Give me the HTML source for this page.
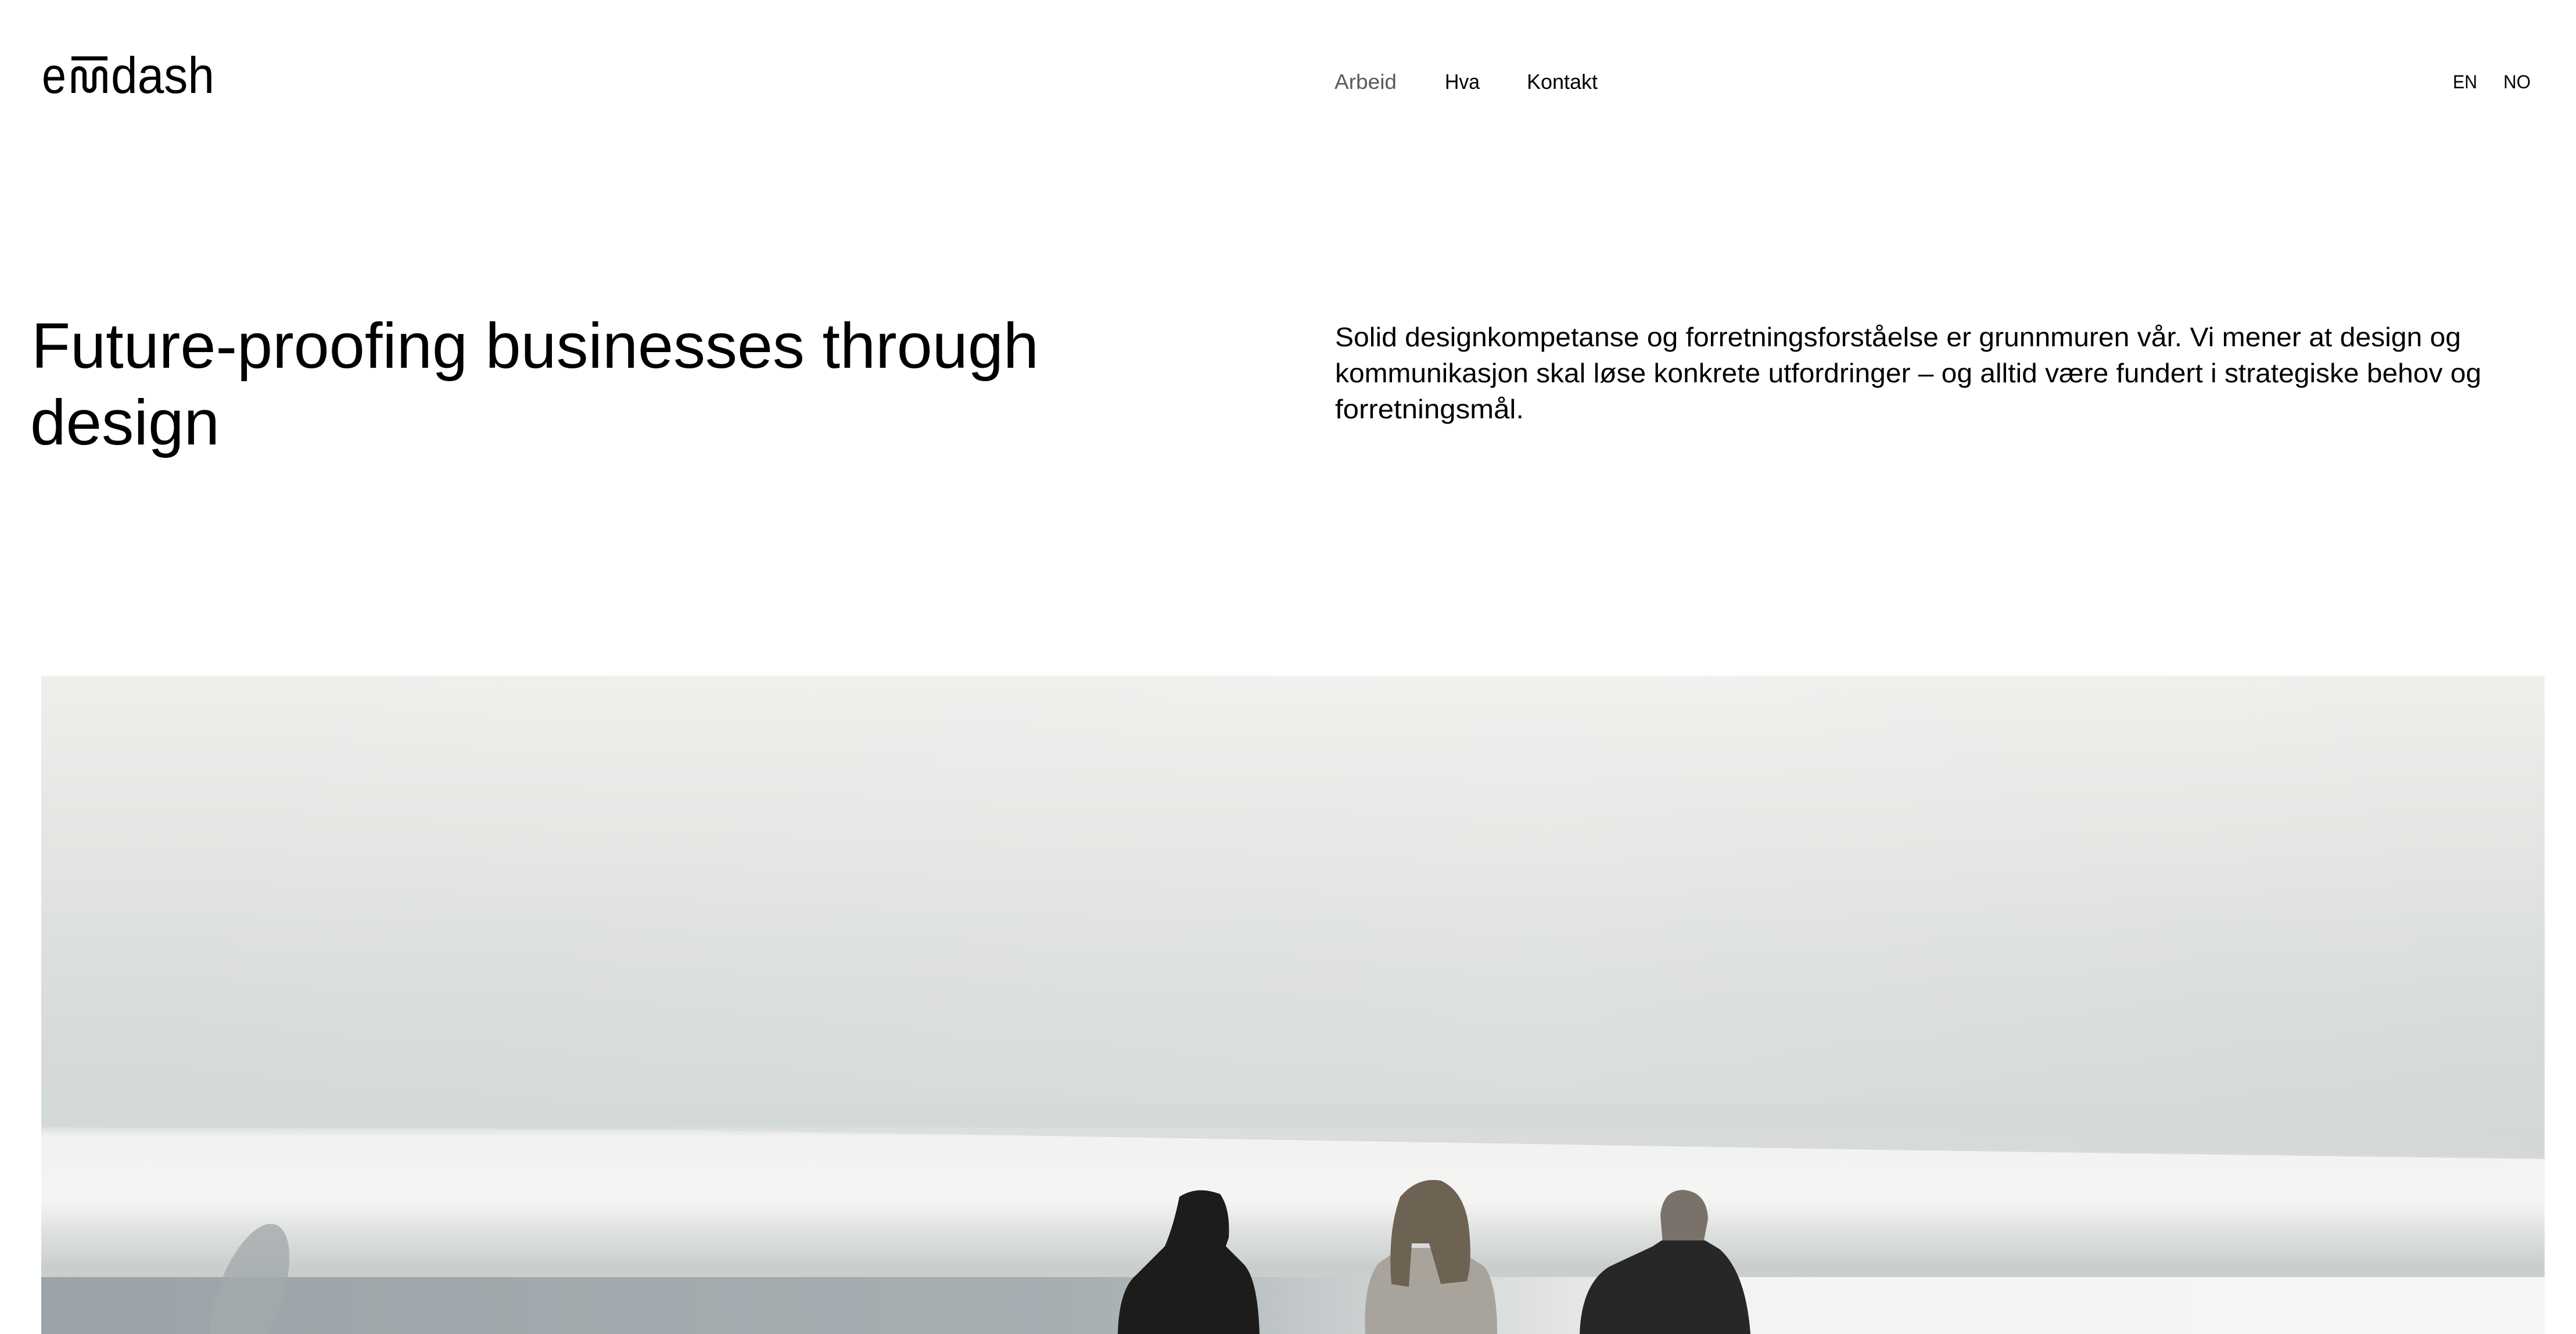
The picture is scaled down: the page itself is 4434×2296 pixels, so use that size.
<!DOCTYPE html>
<html><head><meta charset="utf-8">
<style>
html,body{margin:0;padding:0;background:#fff;}
body{width:4434px;height:2296px;overflow:hidden;position:relative;}
svg{position:absolute;left:0;top:0;}
text{font-family:"Liberation Sans",sans-serif;}
</style></head>
<body>
<svg width="4434" height="2296" viewBox="0 0 4434 2296" xmlns="http://www.w3.org/2000/svg">
<defs>
  <linearGradient id="sky" x1="0" y1="0" x2="0" y2="1">
    <stop offset="0" stop-color="#efefec"/>
    <stop offset="0.25" stop-color="#e4e6e3"/>
    <stop offset="0.5" stop-color="#d8dcda"/>
    <stop offset="0.68" stop-color="#d3d9d7"/>
    <stop offset="0.7" stop-color="#f2f2f0"/>
    <stop offset="0.8" stop-color="#f4f4f2"/>
    <stop offset="0.85" stop-color="#dcdfdd"/>
    <stop offset="0.9" stop-color="#c9cecc"/>
    <stop offset="0.93" stop-color="#cdd1cf"/>
    <stop offset="1" stop-color="#cdd1cf"/>
  </linearGradient>
  <linearGradient id="skyx" x1="0" y1="0" x2="1" y2="0">
    <stop offset="0" stop-color="#fff" stop-opacity="0"/>
    <stop offset="0.6" stop-color="#fff" stop-opacity="0.12"/>
    <stop offset="1" stop-color="#fff" stop-opacity="0"/>
  </linearGradient>
  <linearGradient id="sea" x1="0" y1="0" x2="1" y2="0">
    <stop offset="0" stop-color="#9aa4a8"/>
    <stop offset="0.42" stop-color="#a6afb2"/>
    <stop offset="0.52" stop-color="#c8cdce"/>
    <stop offset="0.66" stop-color="#f3f3f1"/>
    <stop offset="1" stop-color="#f6f6f4"/>
  </linearGradient>
  <linearGradient id="cloudR" x1="0" y1="0" x2="1" y2="0">
    <stop offset="0" stop-color="#f4f4f2" stop-opacity="0"/>
    <stop offset="0.6" stop-color="#d8dbd9" stop-opacity="0.7"/>
    <stop offset="1" stop-color="#d3d7d5" stop-opacity="0.9"/>
  </linearGradient>
</defs>

<!-- logo -->
<text x="72" y="160" font-size="88" textLength="42" lengthAdjust="spacingAndGlyphs">e</text>
<rect x="123" y="97" width="62" height="7" fill="#000"/>
<path d="M126.5,160 V126 A9.5,8.5 0 0 1 145.5,126 V148 A8.5,8.5 0 0 0 162.5,148 V126 A9.25,8.5 0 0 1 181,126 V160" fill="none" stroke="#000" stroke-width="7"/>
<text x="191" y="160" font-size="88" textLength="178" lengthAdjust="spacingAndGlyphs">dash</text>

<!-- nav -->
<text x="2297" y="153" font-size="36" fill="#5a5a5a" textLength="107" lengthAdjust="spacingAndGlyphs">Arbeid</text>
<text x="2487" y="153" font-size="36" fill="#000" textLength="60" lengthAdjust="spacingAndGlyphs">Hva</text>
<text x="2628" y="153" font-size="36" fill="#000" textLength="122" lengthAdjust="spacingAndGlyphs">Kontakt</text>
<text x="4222" y="152" font-size="32" fill="#000" textLength="42" lengthAdjust="spacingAndGlyphs">EN</text>
<text x="4309" y="152" font-size="32" fill="#000" textLength="47" lengthAdjust="spacingAndGlyphs">NO</text>

<!-- headline -->
<text x="54" y="633" font-size="110" fill="#000" textLength="1734" lengthAdjust="spacingAndGlyphs">Future-proofing businesses through</text>
<text x="52" y="765" font-size="110" fill="#000" textLength="326" lengthAdjust="spacingAndGlyphs">design</text>

<!-- paragraph -->
<text x="2298" y="596" font-size="46" fill="#000" textLength="1938" lengthAdjust="spacingAndGlyphs">Solid designkompetanse og forretningsforståelse er grunnmuren vår. Vi mener at design og</text>
<text x="2298" y="658" font-size="46" fill="#000" textLength="1973" lengthAdjust="spacingAndGlyphs">kommunikasjon skal løse konkrete utfordringer – og alltid være fundert i strategiske behov og</text>
<text x="2298" y="720" font-size="46" fill="#000" textLength="325" lengthAdjust="spacingAndGlyphs">forretningsmål.</text>

<!-- photo -->
<rect x="71" y="1163" width="4309" height="1133" fill="url(#sky)"/>
<rect x="71" y="1163" width="4309" height="760" fill="url(#skyx)"/>
<path d="M71,1900 L71,1940 L1200,1945 L2400,1965 L3300,1980 L4380,1995 L4380,1900 Z" fill="#d4d9d7" opacity="0.9"/>
<path d="M71,1940 C1200,1945 2400,1960 4380,1992 L4380,1940 Z" fill="url(#cloudR)"/>
<rect x="71" y="2198" width="4309" height="98" fill="url(#sea)"/>
<ellipse cx="430" cy="2230" rx="55" ry="130" transform="rotate(20 430 2230)" fill="#a4aaab" opacity="0.8"/>

<!-- person 1 -->
<path d="M2030,2060 Q2060,2040 2100,2055 Q2118,2080 2115,2130 L2110,2145 L2140,2175 Q2165,2200 2168,2296 L1924,2296 Q1926,2220 1955,2195 L2005,2145 Q2020,2110 2030,2060 Z" fill="#1c1c1b"/>
<!-- person 2 -->
<path d="M2350,2296 Q2346,2210 2372,2175 L2410,2148 L2505,2148 L2555,2180 Q2577,2210 2577,2296 Z" fill="#a8a49c"/>
<path d="M2395,2210 Q2388,2120 2410,2060 Q2440,2025 2480,2032 Q2520,2050 2528,2110 Q2535,2170 2525,2205 L2480,2210 L2460,2140 L2430,2140 L2425,2215 Z" fill="#6e6253"/>
<!-- person 3 -->
<path d="M2858,2092 Q2862,2048 2898,2048 Q2938,2052 2940,2098 L2932,2140 L2862,2140 Z" fill="#7a726a"/>
<path d="M2860,2135 L2935,2135 L2960,2150 Q3005,2190 3013,2296 L2719,2296 Q2722,2210 2770,2180 L2845,2145 Z" fill="#262726"/>
</svg>
</body></html>
